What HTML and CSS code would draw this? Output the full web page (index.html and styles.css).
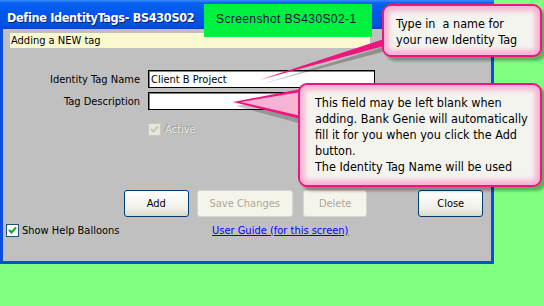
FILE: index.html
```html
<!DOCTYPE html>
<html lang="en">
<head>
    <meta charset="UTF-8">
    <title>Define IdentityTags- BS430S02</title>
    <link rel="stylesheet" href="styles.css">
</head>
<body>
    <div class="window">
        <div class="title-bar">Define IdentityTags- BS430S02</div>
        <div class="content">
            <div class="status">Adding a NEW tag</div>

            <div class="form-row first">
                <label for="tagName">Identity Tag Name</label>
                <input type="text" id="tagName" value="Client B Project">
            </div>
            <div class="form-row">
                <label for="tagDesc">Tag Description</label>
                <input type="text" id="tagDesc" value="">
            </div>

            <div class="active-row">
                <span class="check disabled">
                    <svg width="11" height="11" viewBox="0 0 11 11"><path d="M2 5 L4.5 7.5 L9 2.5" fill="none" stroke="#c9c7bb" stroke-width="2"/></svg>
                </span>
                <span class="active-label">Active</span>
            </div>

            <div class="buttons">
                <button class="btn">Add</button>
                <button class="btn save" disabled>Save Changes</button>
                <button class="btn" disabled>Delete</button>
                <button class="btn close">Close</button>
            </div>

            <div class="bottom-row">
                <div class="help-toggle">
                    <span class="check">
                        <svg width="11" height="11" viewBox="0 0 11 11"><path d="M2 5 L4.5 7.5 L9 2.5" fill="none" stroke="#21a121" stroke-width="2.2"/></svg>
                    </span>
                    <span>Show Help Balloons</span>
                </div>
                <a href="#" class="guide-link">User Guide (for this screen)</a>
            </div>
        </div>
    </div>

    <!-- overlays: screenshot label and help balloons -->
    <div class="shot-label">Screenshot BS430S02-1</div>

    <svg class="pointers" width="544" height="306" viewBox="0 0 544 306">
        <polygon points="262,84 386,46 386,51" fill="rgba(0,0,0,0.25)"/>
        <polygon points="259,80 384,39 384,46" fill="#f0147f"/>
        <polygon points="236,106 302,94 302,124" fill="rgba(0,0,0,0.22)"/>
        <polygon points="233,102 301,89 301,119" fill="#f0147f"/>
        <polygon points="241,102 301,92 301,116" fill="#f7b3d3"/>
    </svg>

    <div class="balloon balloon-name">Type in&nbsp; a name for<br>your new Identity Tag</div>
    <div class="balloon balloon-desc">This field may be left blank when<br>adding. Bank Genie will automatically<br>fill it for you when you click the Add<br>button.<br>The Identity Tag Name will be used</div>
</body>
</html>
```

FILE: styles.css
```css
body {
    margin: 0;
    width: 544px;
    height: 306px;
    overflow: hidden;
    position: relative;
    background-color: #80ff80;
    font-family: "DejaVu Sans Condensed", "Liberation Sans", sans-serif;
    font-size: 11px;
    color: #000;
}

.window {
    width: 494px;
    height: 264px;
    box-sizing: border-box;
    background-color: #c0c0c0;
    border: 3px solid #0a4ee0;
    border-top: none;
    display: flex;
    flex-direction: column;
}

.title-bar {
    height: 29px;
    margin: 0 -3px;
    padding: 0 7px;
    box-sizing: border-box;
    background: linear-gradient(#3a8cff 0, #0a62f0 3px, #0058ee 12px, #0053e0 24px, #0046c8 29px);
    color: #fff;
    font-weight: bold;
    font-size: 12.5px;
    letter-spacing: -0.3px;
    line-height: 35px;
    text-shadow: 1px 1px 0 #0a1e7a;
}

.content {
    flex: 1;
    display: flex;
    flex-direction: column;
}

.status {
    margin: 4px 0 0 7px;
    width: 359px;
    height: 15px;
    line-height: 15px;
    padding-left: 1px;
    background-color: #fbf9d0;
}

.form-row {
    display: grid;
    grid-template-columns: 137px 227px;
    column-gap: 8px;
    align-items: center;
    margin-top: 4px;
}

.form-row.first {
    margin-top: 22px;
}

.form-row label {
    text-align: right;
}

.form-row input {
    height: 18px;
    box-sizing: border-box;
    border: 1px solid #000;
    box-shadow: inset 1px 1px 0 #808080;
    padding: 0 2px;
    font: inherit;
    background: #fff;
}

.active-row {
    display: flex;
    align-items: center;
    gap: 4px;
    margin: 13px 0 0 145px;
    height: 13px;
}

.check {
    width: 13px;
    height: 13px;
    box-sizing: border-box;
    border: 1px solid #1c5180;
    background: #fff;
    display: flex;
    align-items: center;
    justify-content: center;
}

.check.disabled {
    border-color: #cac8bb;
    background: #e8e6da;
}

.active-label {
    color: #e6e6e6;
    text-shadow: -1px -1px 0 #999, 1px 1px 0 #b0b0b0;
}

.buttons {
    display: flex;
    margin: 54px 0 0 121px;
    height: 27px;
}

.btn {
    width: 65px;
    height: 27px;
    margin-right: 8px;
    border: 1px solid #003c74;
    border-radius: 3px;
    background: linear-gradient(#ffffff, #f0efe8 70%, #dcd9cc);
    font: inherit;
    color: #000;
}

.btn.save {
    width: 97px;
    margin-right: 10px;
}

.btn:disabled {
    border-color: #d8d6ca;
    background: #f5f4ea;
    color: #aca899;
}

.btn.close {
    margin-left: 43px;
}

.bottom-row {
    display: flex;
    align-items: center;
    margin: 6px 0 0 3px;
    height: 14px;
}

.help-toggle {
    display: flex;
    align-items: center;
    gap: 3px;
    width: 206px;
}

.guide-link {
    color: #0000ff;
    text-decoration: underline;
}

.shot-label {
    position: absolute;
    left: 204px;
    top: 4px;
    width: 168px;
    height: 33px;
    box-sizing: border-box;
    padding: 8px 0 0 12px;
    background-color: #00f040;
    color: #101048;
    font-family: "Liberation Sans", sans-serif;
    font-size: 12px;
    letter-spacing: 0.4px;
}

.pointers {
    position: absolute;
    left: 0;
    top: 0;
}

.balloon {
    position: absolute;
    box-sizing: border-box;
    border: 2px solid #f0147f;
    border-radius: 9px;
    background: #f4f4ef;
    box-shadow: inset 0 0 5px 5px #f8b2d3, 4px 4px 3px rgba(0, 0, 0, 0.3);
    font-size: 12.5px;
    line-height: 16px;
    color: #000;
}

.balloon-name {
    left: 382px;
    top: 4px;
    width: 160px;
    height: 53px;
    padding: 10px 0 0 12px;
}

.balloon-desc {
    left: 298px;
    top: 83px;
    width: 244px;
    height: 104px;
    padding: 10px 0 0 15px;
}
```
